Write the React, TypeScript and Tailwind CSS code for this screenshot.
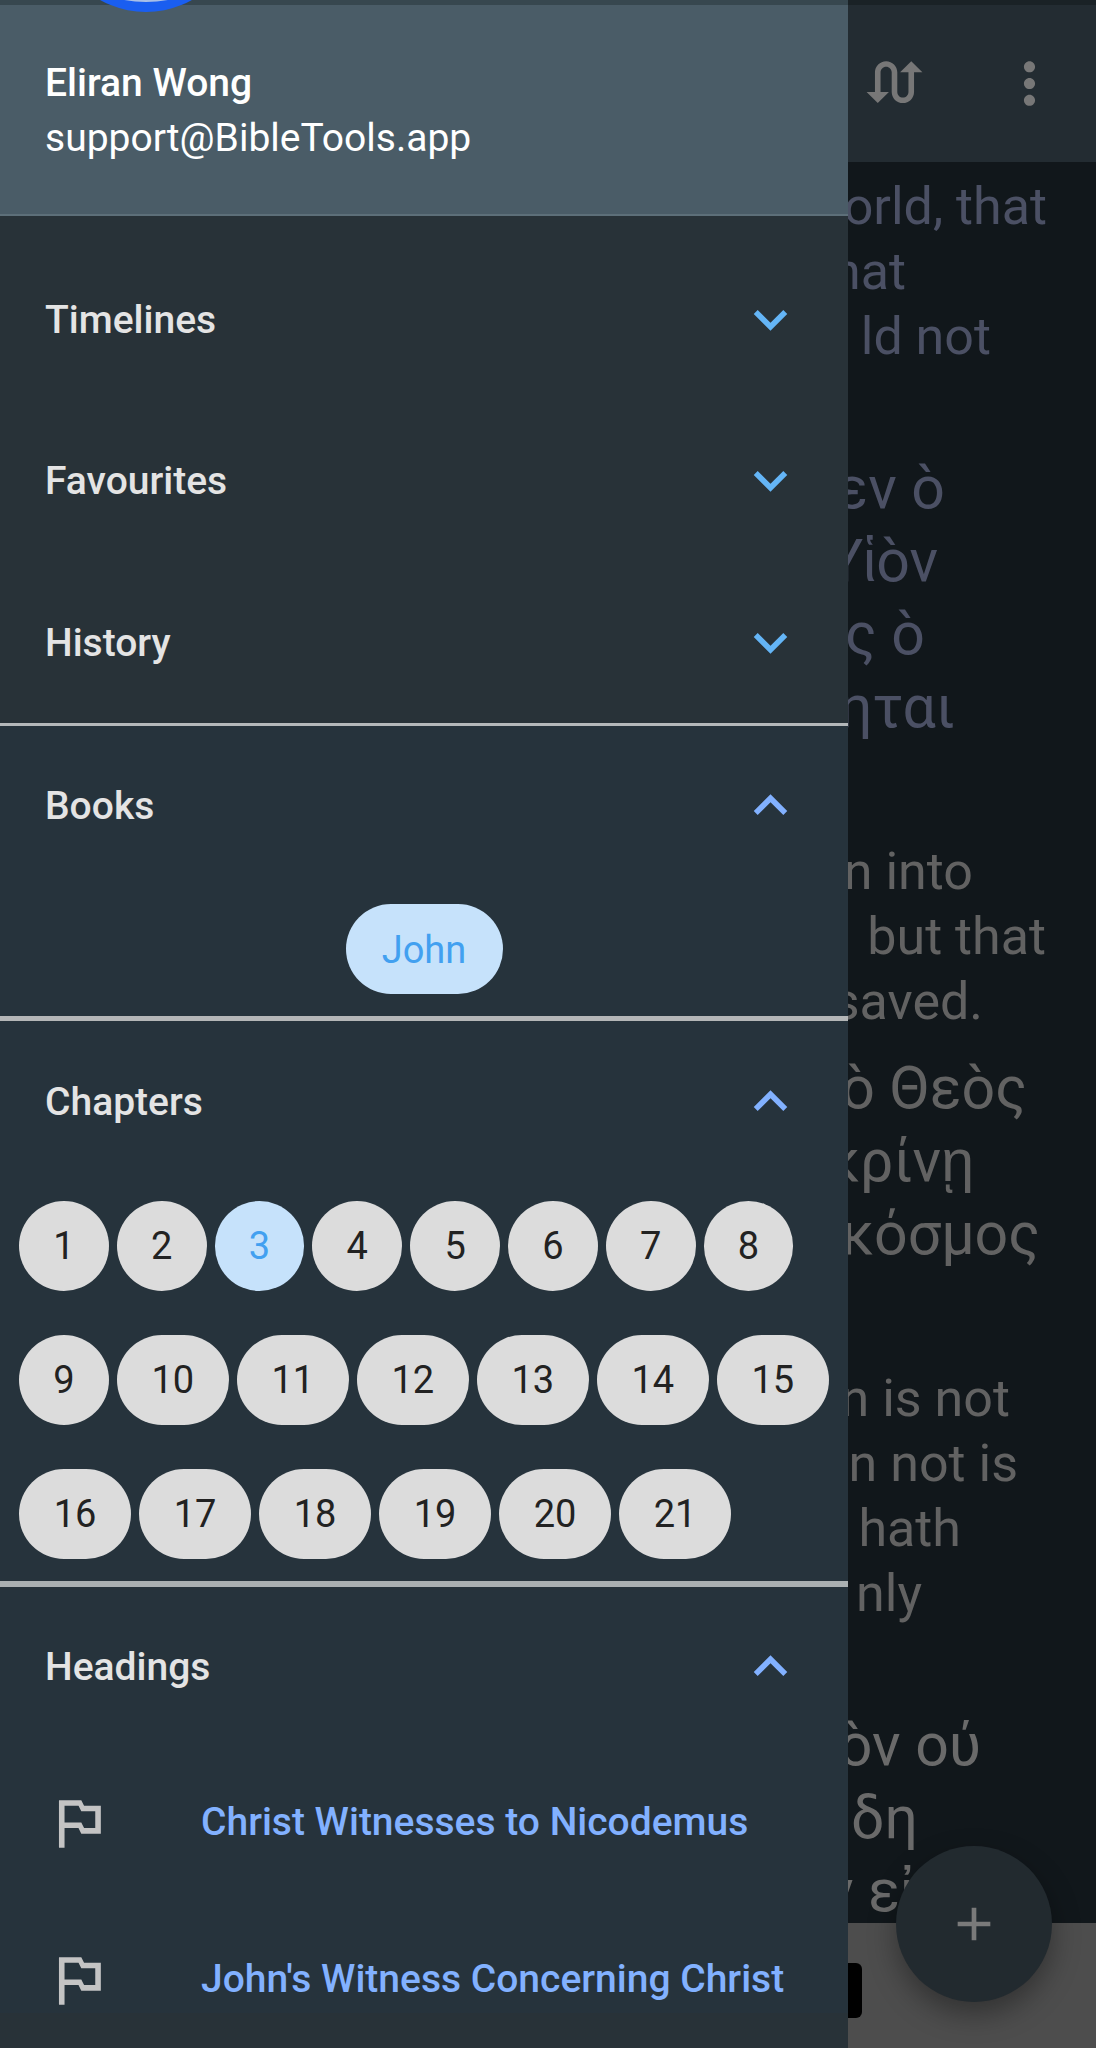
const verses = [
  {
    gap: "mb-[82px] text-[52px] leading-[65px]",
    color: "text-[#4b5064]",
    lines: [
      { text: "orld, that", end: 1047 },
      { text: "that", end: 906 },
      { text: "ld not", end: 991 },
    ],
  },
  {
    gap: "mb-[96px] text-[59px] leading-[73px]",
    color: "text-[#4b5064]",
    lines: [
      { text: "εν ὸ", end: 945 },
      { text: "Υἱὸν", end: 938 },
      { text: "ς ὸ", end: 925 },
      { text: "ηται", end: 955 },
    ],
  },
  {
    gap: "mb-[17px] text-[52px] leading-[65px]",
    color: "text-[#626262]",
    lines: [
      { text: "n into", end: 973 },
      { text: "but that", end: 1046 },
      { text: "saved.", end: 983 },
    ],
  },
  {
    gap: "mb-[96px] text-[59px] leading-[73px]",
    color: "text-[#626262]",
    lines: [
      { text: "ὸ Θεὸς", end: 1027 },
      { text: "κρίνῃ", end: 974 },
      { text: "κόσμος", end: 1040 },
    ],
  },
  {
    gap: "mb-[82px] text-[52px] leading-[65px]",
    color: "text-[#626262]",
    lines: [
      { text: "n is not", end: 1010 },
      { text: "n not is", end: 1018 },
      { text: "hath", end: 961 },
      { text: "nly", end: 922 },
    ],
  },
  {
    gap: "text-[59px] leading-[73px]",
    color: "text-[#6a6a6a]",
    lines: [
      { text: "ὸν ού", end: 981 },
      { text: "δη", end: 918 },
      { text: "ν εἰς", end: 945 },
    ],
  },
];

const chapterRows = [
  [1, 2, 3, 4, 5, 6, 7, 8],
  [9, 10, 11, 12, 13, 14, 15],
  [16, 17, 18, 19, 20, 21],
];

const headings = ["Christ Witnesses to Nicodemus", "John's Witness Concerning Christ"];

function Icon({ d, className }: { d: string; className: string }) {
  return (
    <svg viewBox="0 0 24 24" fill="currentColor" className={className} aria-hidden="true">
      <path d={d} />
    </svg>
  );
}

const chevronDown = "M16.59 8.59L12 13.17 7.41 8.59 6 10l6 6 6-6z";
const chevronUp = "M12 8l-6 6 1.41 1.41L12 10.83l4.59 4.58L18 14z";
const flag = "M14 6l-1-2H5v17h2v-7h5l1 2h7V6h-6zm4 8h-4l-1-2H7V6h5l1 2h5v6z";
const swapCalls =
  "M18 4l-4 4h3v7c0 1.1-.9 2-2 2s-2-.9-2-2V8c0-2.21-1.79-4-4-4S5 5.79 5 8v7H2l4 4 4-4H7V8c0-1.1.9-2 2-2s2 .9 2 2v7c0 2.21 1.79 4 4 4s4-1.79 4-4V8h3l-4-4z";
const moreVert =
  "M12 8c1.1 0 2-.9 2-2s-.9-2-2-2-2 .9-2 2 .9 2 2 2zm0 2c-1.1 0-2 .9-2 2s.9 2 2 2 2-.9 2-2-.9-2-2-2zm0 6c-1.1 0-2 .9-2 2s.9 2 2 2 2-.9 2-2-.9-2-2-2z";

function SectionRow({ title, open, className }: { title: string; open?: boolean; className: string }) {
  return (
    <div className={`flex items-center justify-between pl-[45px] pr-[44px] ${className}`}>
      <span className="pt-[1px] text-[39px] font-medium leading-[46px] text-[#e4e4e4]">{title}</span>
      <Icon
        d={open ? chevronUp : chevronDown}
        className={`h-[67px] w-[67px] ${open ? "text-[#82b1ff]" : "text-[#64b5f6]"}`}
      />
    </div>
  );
}

function Chip({ label, selected }: { label: string | number; selected?: boolean }) {
  const wide = String(label).length > 1;
  return (
    <div
      className={`flex h-[90px] items-center justify-center rounded-full text-[38px] ${wide ? "w-[112px]" : "w-[89.8px]"} ${
        selected ? "bg-[#c6e2fb] text-[#42a0f0]" : "bg-[#dcdcdc] text-[#222222]"
      }`}
    >
      {label}
    </div>
  );
}

export default function App() {
  return (
    <div className="relative h-[2048px] w-[1096px] overflow-hidden bg-[#11171b] font-['Roboto',sans-serif]">
      <div className="h-[5px] bg-[#1a2226]" />
      <div className="flex h-[157px] items-center justify-end gap-[68px] bg-[#232c32] pr-[33px] text-[#777777]">
        <Icon d={swapCalls} className="h-[67px] w-[67px]" />
        <Icon d={moreVert} className="h-[67px] w-[67px]" />
      </div>

      <div className="ml-[848px] overflow-hidden pt-[12px]">
        {verses.map((verse) => (
          <div key={verse.lines[0].text} className={`${verse.color} ${verse.gap}`}>
            {verse.lines.map((line) => (
              <div
                key={line.text}
                className="flex justify-end whitespace-nowrap"
                style={{ width: line.end - 848 }}
              >
                {line.text}
              </div>
            ))}
          </div>
        ))}
      </div>

      <div className="absolute inset-x-0 bottom-0 h-[125px] bg-[#4d4d4d]">
        <div className="absolute left-[848px] top-[40px] h-[55px] w-[14px] rounded-r-[6px] bg-black" />
      </div>

      <div className="absolute left-[896px] top-[1846px] flex h-[156px] w-[156px] items-center justify-center rounded-full bg-[#222a2f] shadow-[0_12px_28px_rgba(0,0,0,0.35)]">
        <Icon d="M19 13h-6v6h-2v-6H5v-2h6V5h2v6h6v2z" className="h-[56px] w-[56px] text-[#7a7a7a]" />
      </div>

      <aside className="absolute inset-y-0 left-0 w-[848px] overflow-hidden bg-[#283238]">
        <div className="h-[5px] bg-[#37474f]" />
        <div className="flex h-[211px] flex-col border-b-2 border-[#5d6f79] bg-[#4a5c67] pl-[45px] pt-[51px] text-white">
          <span className="text-[39px] font-medium leading-[55px]">Eliran Wong</span>
          <span className="text-[39px] leading-[55px]">support@BibleTools.app</span>
        </div>
        <div className="absolute left-[52px] top-[-176px] flex h-[188px] w-[188px] items-end justify-center overflow-hidden rounded-full bg-[#1a5ef0]">
          <div className="mb-[10px] h-[240px] w-[240px] shrink-0 rounded-full bg-[#a9bfe6]" />
        </div>

        <SectionRow title="Timelines" className="mt-[22px] h-[162px]" />
        <SectionRow title="Favourites" className="h-[161px]" />
        <SectionRow title="History" className="h-[162px]" />
        <div className="h-[3px] bg-[#b4b8ba]" />

        <div className="bg-[#26333c]">
          <SectionRow title="Books" open className="h-[158px]" />
          <div className="flex justify-center pt-[20px]">
            <div className="flex h-[90px] w-[157px] items-center justify-center rounded-full bg-[#c6e2fb] pt-[2px] text-[38px] text-[#42a0f0]">
              John
            </div>
          </div>
          <div className="mt-[22px] h-[5px] bg-[#b4b6b7]" />

          <SectionRow title="Chapters" open className="h-[160px]" />
          <div className="flex flex-col gap-[44px] pl-[19px] pt-[20px]">
            {chapterRows.map((row) => (
              <div key={row[0]} className="flex gap-[8px]">
                {row.map((n) => (
                  <Chip key={n} label={n} selected={n === 3} />
                ))}
              </div>
            ))}
          </div>
          <div className="mt-[22px] h-[6px] bg-[#aab0b2]" />

          <SectionRow title="Headings" open className="h-[159px]" />
          <div className="flex flex-col gap-[90px] pl-[45px] pt-[43px]">
            {headings.map((heading) => (
              <div key={heading} className="flex h-[67px] items-center gap-[89px]">
                <Icon d={flag} className="h-[67px] w-[67px] text-[#c4c4c4]" />
                <span className="whitespace-nowrap text-[39px] font-medium text-[#82b1ff]">{heading}</span>
              </div>
            ))}
          </div>
        </div>
      </aside>
    </div>
  );
}
